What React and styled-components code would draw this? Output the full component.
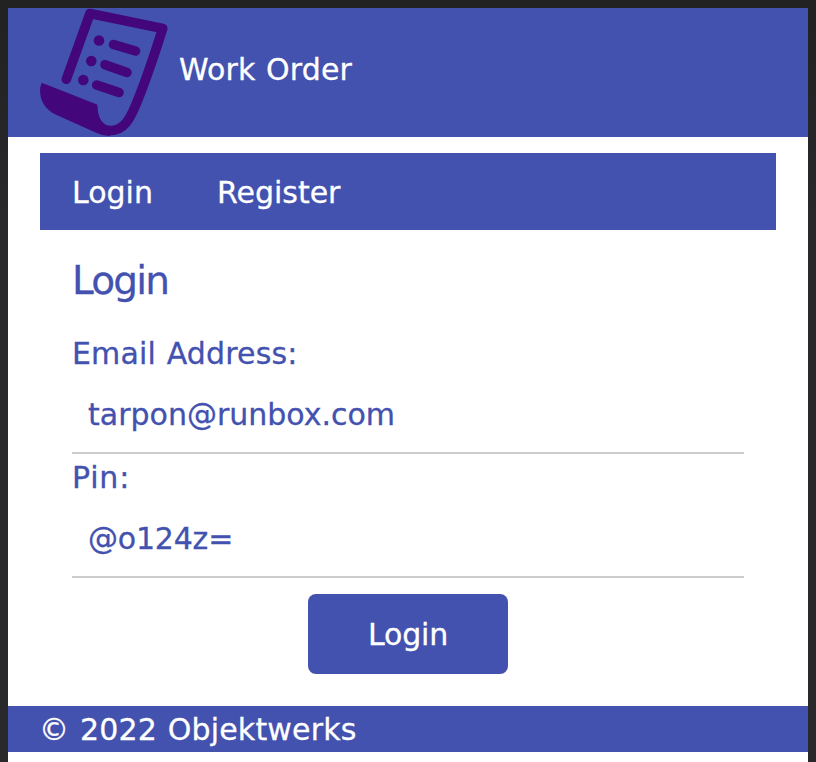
import React from "react";
import styled, { createGlobalStyle } from "styled-components";

const indigo = "#4351af";

const GlobalStyle = createGlobalStyle`
  *, *::before, *::after { box-sizing: border-box; }
  body {
    margin: 0;
    background: #252528;
    color: ${indigo};
    font: 30px/36px Verdana, "DejaVu Sans", sans-serif;
    word-spacing: 1px;
    -webkit-text-stroke: 0.3px currentColor;
  }
`;

const Window = styled.div`
  height: 762px;
  padding: 8px 8px 0;
  overflow: hidden;
  background: linear-gradient(#222223 8px, #29292c 240px);
`;

const Page = styled.div`
  height: 754px;
  background: #fff;
`;

const Header = styled.header`
  display: flex;
  height: 129px;
  padding: 0 32px;
  background: ${indigo};
  color: #fff;
`;

const Logo = styled.svg`
  display: block;
  width: 128px;
  height: 128px;
  filter: blur(0.4px);
`;

const Brand = styled.span`
  margin-left: 11px;
  line-height: 123px;
  letter-spacing: 0.12px;
`;

const Main = styled.main`
  padding: 16px 32px 32px;
`;

const Nav = styled.nav`
  display: flex;
  gap: 64px;
  height: 77px;
  padding: 0 32px;
  background: ${indigo};
`;

const NavLink = styled.a`
  color: #fff;
  line-height: 80px;
  text-decoration: none;
`;

const Form = styled.form`
  display: flex;
  flex-direction: column;
  padding: 0 32px;
`;

const Title = styled.h1`
  height: 100px;
  margin: 0;
  font-size: 39px;
  font-weight: 400;
  line-height: 101px;
  letter-spacing: -1.8px;
`;

const Field = styled.label`
  display: flex;
  flex-direction: column;
  height: 124px;
`;

const Caption = styled.span`
  line-height: 47px;
  letter-spacing: ${(p) => p.$spacing};
`;

const Input = styled.input`
  height: 77px;
  padding: 0 16px;
  border: 0;
  border-bottom: 2px solid #ccc;
  border-radius: 0;
  outline: 0;
  background: transparent;
  color: inherit;
  font: inherit;
  letter-spacing: ${(p) => p.$spacing || "normal"};
`;

const Button = styled.button`
  align-self: center;
  width: 200px;
  height: 80px;
  margin-top: 16px;
  padding: 2px 0 0;
  border: 0;
  border-radius: 8px;
  background: ${indigo};
  color: #fff;
  font: inherit;
  letter-spacing: -0.2px;
`;

const Footer = styled.footer`
  height: 46px;
  padding: 0 31px;
  background: ${indigo};
  color: #fff;
  line-height: 48px;
  letter-spacing: 0.18px;
`;

function ScrollLogo() {
  return (
    <Logo viewBox="0 0 128 128" aria-hidden="true">
      <g fill="none" stroke="#43067b" strokeWidth="9.6" strokeLinecap="round" strokeLinejoin="round">
        <path d="M26.3 71.3 50 5.5 122.7 20.5C114 48 107 69 98 91.500C90 112 84 122.500 69.500 122.800C61 122.500 55 116 53 104" />
        <path d="M73.5 36.5 95.5 43M65 56.7 87 64.5M56.7 77 79 84.5" />
      </g>
      <g fill="#43067b">
        <path d="M1.7 74.7 57 96.500Q58 98 57.800 103C59 112 64 117.700 70 117.700V128Q63 128 56.700 125L15 106.300C4 100 -1 91 0.300 79Z" />
        <circle cx="59" cy="32.5" r="5.3" />
        <circle cx="51.3" cy="53" r="5.3" />
        <circle cx="43.3" cy="72" r="5.3" />
      </g>
    </Logo>
  );
}

export default function App() {
  return (
    <>
      <GlobalStyle />
      <Window>
        <Page>
          <Header>
            <ScrollLogo />
            <Brand>Work Order</Brand>
          </Header>
          <Main>
            <Nav>
              <NavLink href="#login">Login</NavLink>
              <NavLink href="#register">Register</NavLink>
            </Nav>
            <Form>
              <Title>Login</Title>
              <Field>
                <Caption $spacing="0.15px">Email Address:</Caption>
                <Input type="text" defaultValue="tarpon@runbox.com" spellCheck={false} />
              </Field>
              <Field>
                <Caption $spacing="0.8px">Pin:</Caption>
                <Input type="text" defaultValue="@o124z=" spellCheck={false} $spacing="-0.2px" />
              </Field>
              <Button type="button">Login</Button>
            </Form>
          </Main>
          <Footer>© 2022 Objektwerks</Footer>
        </Page>
      </Window>
    </>
  );
}
